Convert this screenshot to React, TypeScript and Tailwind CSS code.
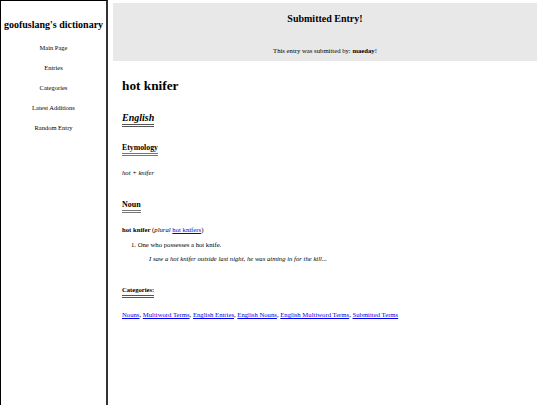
export default function App() {
  const nav = ["Main Page", "Entries", "Categories", "Latest Additions", "Random Entry"];
  const cats = [
    "Nouns",
    "Multiword Terms",
    "English Entries",
    "English Nouns",
    "English Multiword Terms",
    "Submitted Terms",
  ];
  return (
    <div className="flex h-[405px] w-[540px] overflow-hidden bg-white text-black [font-family:'Liberation_Serif',serif]">
      {/* sidebar */}
      <div className="w-[108px] shrink-0 h-[420px] border-l border-t border-black border-r-2 border-r-[#333]">
        <div className="pt-[17px] text-center text-[10px] font-bold leading-[14px] whitespace-nowrap">
          goofuslang's dictionary
        </div>
        <div className="mt-[10px] flex flex-col items-center gap-[8px] text-[6.5px] leading-[12px]">
          {nav.map((n) => (
            <div key={n}>{n}</div>
          ))}
        </div>
      </div>

      {/* main */}
      <div className="flex-1 pl-[5px] pr-[3px] pt-[3px]">
        <div className="h-[58px] bg-[#e8e8e8] flex flex-col items-center">
          <div className="mt-[9px] text-[10px] font-bold leading-[14px]">Submitted Entry!</div>
          <div className="mt-[19px] text-[6.7px] leading-[12px]">
            This entry was submitted by: <b>maeday</b>!
          </div>
        </div>

        <div className="pl-[9px]">
          <div className="mt-[16px] text-[13.3px] font-bold leading-[18px]">hot knifer</div>

          <div className="mt-[16px] inline-block text-[10px] font-bold italic leading-[13px] border-b-[3px] border-double border-[#555]">
            English
          </div>

          <div>
            <div className="mt-[14px] inline-block text-[7.8px] font-bold leading-[11px] border-b-[3px] border-double border-[#777]">
              Etymology
            </div>
          </div>

          <div className="mt-[11px] text-[6.7px] italic leading-[10px]">hot + knifer</div>

          <div>
            <div className="mt-[21px] inline-block text-[8px] font-bold leading-[11px] border-b-[3px] border-double border-[#777]">
              Noun
            </div>
          </div>

          <div className="mt-[11px] text-[6.7px] leading-[10px]">
            <b>hot knifer</b> (<i>plural</i>{" "}
            <a className="text-[#0000ee] underline">hot knifers</a>)
          </div>

          <ol className="mt-[5px] pl-[9px] text-[6.7px] leading-[10px]">
            <li>1. One who possesses a hot knife.</li>
          </ol>
          <div className="mt-[4px] pl-[27px] text-[6.7px] italic leading-[10px]">
            I saw a hot knifer outside last night, he was aiming in for the kill...
          </div>

          <div>
            <div className="mt-[21px] inline-block text-[6.6px] font-bold leading-[10px] border-b-[3px] border-double border-[#555]">
              Categories:
            </div>
          </div>

          <div className="mt-[11px] text-[6.7px] leading-[10px]">
            {cats.map((c, i) => (
              <span key={c}>
                <a className="text-[#0000ee] underline">{c}</a>
                {i < cats.length - 1 ? ", " : ""}
              </span>
            ))}
          </div>
        </div>
      </div>
    </div>
  );
}
